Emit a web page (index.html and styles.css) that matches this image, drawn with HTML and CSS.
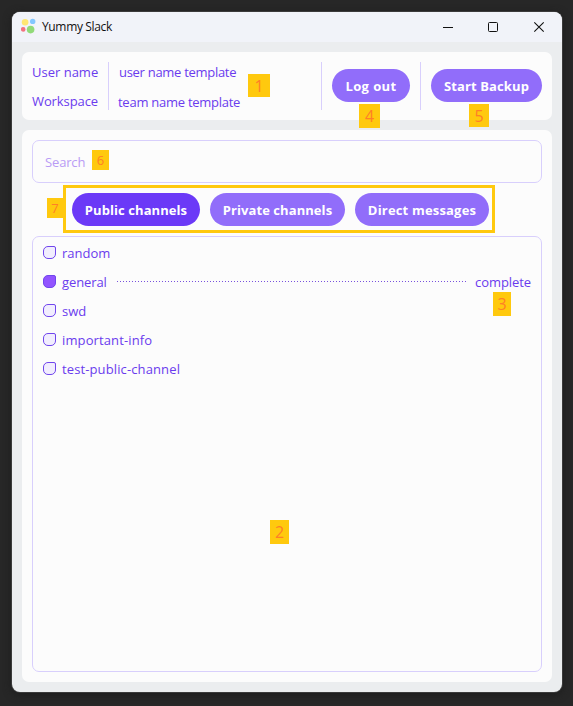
FILE: index.html
```html
<!DOCTYPE html>
<html lang="en">
<head>
<meta charset="utf-8">
<title>Yummy Slack</title>
<link rel="stylesheet" href="styles.css">
</head>
<body>
<div class="window">
  <header class="titlebar">
    <svg class="logo" width="16" height="16" viewBox="0 0 16 16"><circle cx="4.1" cy="4.2" r="3.3" fill="#ffe772"/><circle cx="11.7" cy="3.4" r="2.7" fill="#82c7ff"/><circle cx="2.2" cy="11.4" r="2.3" fill="#f3727f"/><circle cx="9.6" cy="11.6" r="3.8" fill="#91da79"/></svg>
    <h1 class="title"><span>Yummy Slack</span></h1>
    <svg class="controls" width="102" height="12" viewBox="0 0 102 12" fill="none" stroke="#111"><path d="M0 6.5H10"/><rect x="45.5" y="1.5" width="9" height="9" rx="1"/><path d="M91.3 1.3L100.7 10.7M100.7 1.3L91.3 10.7" stroke-width="1.1"/></svg>
  </header>
  <main class="content">
    <section class="panel account">
      <div class="labels"><span>User name</span><span class="workspace-label">Workspace</span></div>
      <div class="values"><span>user name template</span><span class="team-value">team name template</span></div>
      <div class="action"><button class="pill logout"><span>Log out</span></button></div>
      <div class="action"><button class="pill backup"><span>Start Backup</span></button></div>
    </section>
    <section class="panel channels">
      <div class="search"><span>Search</span></div>
      <nav class="tabs">
        <button class="pill public active"><span>Public channels</span></button>
        <button class="pill private"><span>Private channels</span></button>
        <button class="pill direct"><span>Direct messages</span></button>
      </nav>
      <ul class="list">
        <li><i class="check"></i><span>random</span></li>
        <li><i class="check checked"></i><span class="general">general</span><i class="dots"></i><span class="complete">complete</span></li>
        <li><i class="check"></i><span>swd</span></li>
        <li><i class="check"></i><span class="spaced">important-info</span></li>
        <li><i class="check"></i><span class="spaced">test-public-channel</span></li>
      </ul>
    </section>
  </main>
</div>
<div class="frame"></div>
<b class="tag t1">1</b><b class="tag t2">2</b><b class="tag t3">3</b><b class="tag t4">4</b><b class="tag t5">5</b><b class="tag t6">6</b><b class="tag t7">7</b>
</body>
</html>
```
FILE: styles.css
```css
* { box-sizing: border-box; }
body { margin: 0; width: 573px; height: 706px; padding: 12px 11px 14px 12px; overflow: hidden; background: #272727; font: 13px/20px "Open Sans", "Noto Sans", sans-serif; color: #6a3bee; }
.window { width: 550px; height: 680px; border-radius: 8px; overflow: hidden; background: #ebedef; display: flex; flex-direction: column; box-shadow: 0 0 0 1px #3b3b3b, 0 2px 8px #1b1b1b; }
.titlebar { height: 30px; flex: none; display: flex; align-items: center; padding: 0 17px 0 8px; background: #f1f3f9; }
.logo { margin: -2px 5px 0 1px; }
.title { margin: 0; flex: 1; font-size: 12px; font-weight: 400; letter-spacing: -0.35px; color: #111; white-space: nowrap; }
.controls { margin: -1px 0 0; }
.content { flex: 1; padding: 10px; display: flex; flex-direction: column; gap: 10px; }
.panel { background: #fcfcfc; border-radius: 7px; padding: 10px; }
.account { height: 68px; display: flex; }
.labels { width: 76px; display: flex; flex-direction: column; gap: 9px; white-space: nowrap; }
.workspace-label { letter-spacing: -0.1px; }
.values { flex: 1; border-left: 1px solid #d8cffc; padding-left: 10px; display: flex; flex-direction: column; gap: 10px; letter-spacing: -0.29px; white-space: nowrap; }
.team-value { margin-left: -1px; letter-spacing: -0.26px; }
.action { border-left: 1px solid #d8cffc; padding: 7px 10px 0; }
.action:last-child { padding-right: 0; }
.pill { display: block; height: 33px; padding: 0; border: 0; border-radius: 17px; background: #916dfa; color: #fff; font: 700 13px/34px "Open Sans", "Noto Sans", sans-serif; letter-spacing: 0.07px; white-space: nowrap; }
.logout { width: 78px; letter-spacing: 0.4px; }
.backup { width: 111px; letter-spacing: 0.12px; }
.channels { flex: 1; display: flex; flex-direction: column; gap: 10px; }
.search { height: 43px; flex: none; border: 1px solid #d8cffc; border-radius: 7px; padding: 11px 12px; color: #b99bf5; letter-spacing: -0.15px; }
.tabs { display: flex; gap: 10px; padding-left: 40px; }
.public { width: 128px; }
.private { width: 135px; }
.direct { width: 134px; letter-spacing: 0.18px; }
.active { background: #6b39f7; }
.list { flex: 1; margin: 0; padding: 1px 10px; border: 1px solid #d8cffc; border-radius: 7px; list-style: none; }
.list li { height: 29px; display: flex; align-items: center; white-space: nowrap; }
.check { flex: none; width: 13px; height: 13px; margin: -1px 6px 0 0; border: 1px solid #7046ed; border-radius: 5px 2px 5px 5px; background: #f1edfe; }
.checked { background: #9254ff; }
.general { letter-spacing: -0.1px; }
.complete { letter-spacing: -0.08px; }
.spaced { letter-spacing: 0.12px; }
.dots { flex: 1; height: 1px; margin: -1px 9px 0 10px; background: repeating-linear-gradient(90deg, #7851dd 0 1px, transparent 1px 3px); }
.frame { position: absolute; left: 63px; top: 185px; width: 432px; height: 48px; border: 3px solid #ffc90e; }
.tag { position: absolute; display: flex; align-items: center; justify-content: center; background: #ffc90e; color: #ff7f27; font-weight: 400; font-size: 16px; }
.t1 { left: 248px; top: 74px; width: 22px; height: 23px; }
.t2 { left: 270px; top: 520px; width: 19px; height: 24px; }
.t3 { left: 493px; top: 292px; width: 18px; height: 24px; }
.t4 { left: 359px; top: 104px; width: 21px; height: 24px; }
.t5 { left: 469px; top: 104px; width: 20px; height: 23px; }
.t6 { left: 92px; top: 150px; width: 17px; height: 20px; font-size: 13px; }
.t7 { left: 47px; top: 198px; width: 16px; height: 20px; font-size: 13px; }
```
